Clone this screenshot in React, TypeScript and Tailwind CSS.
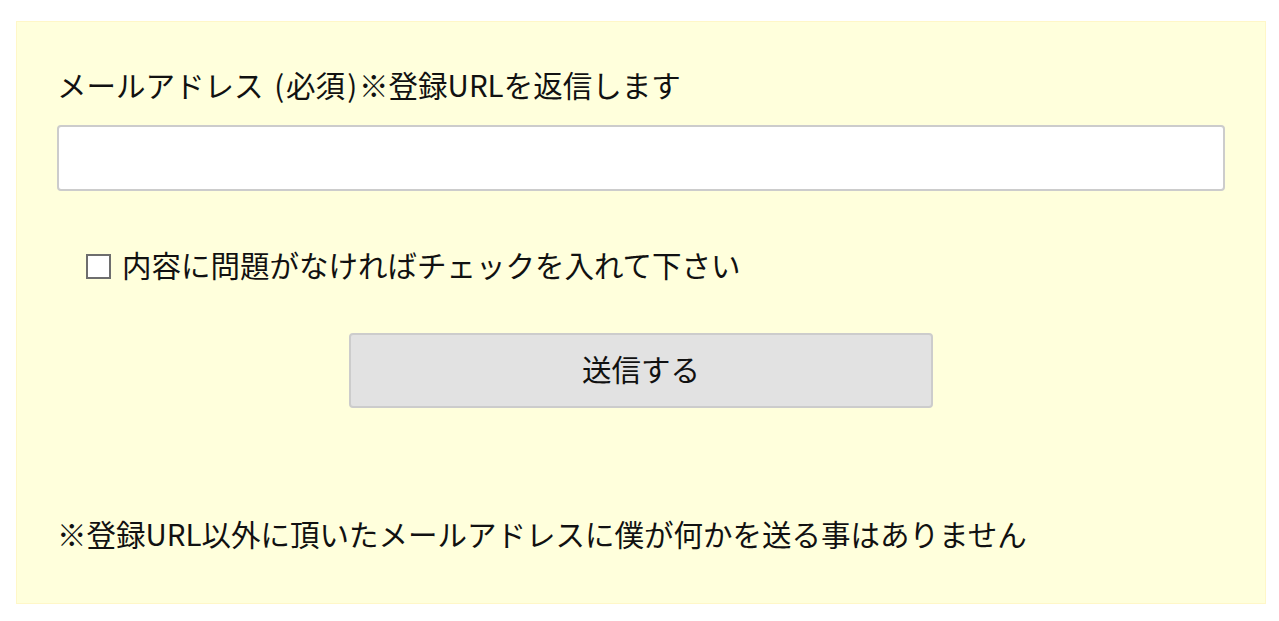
export default function App() {
  const font = { fontFamily: '"Noto Sans CJK JP", "Noto Sans", sans-serif' };
  return (
    <div className="bg-white w-[1279px] h-[621px] pt-[21px] pl-[16px]" style={font}>
      <div className="w-[1250px] h-[583px] border border-[#fff7c8] bg-[#ffffdc] pt-[40px] px-[40px] text-[#111] text-[29.5px]">
        <div className="h-[44px] leading-[44px] whitespace-nowrap">
          メールアドレス<span className="ml-[2px]"> </span><span className="px-[2px]">(</span>必須<span className="px-[2px]">)</span>※登録URLを返信します
        </div>
        <div className="mt-[19px] h-[66px] w-[1168px] rounded-[4px] border-2 border-[#cccccc] bg-white" />
        <div className="mt-[51px] ml-[29px] flex items-center h-[44px] whitespace-nowrap">
          <span className="w-[25px] h-[25px] border-2 border-[#6e6e6e] bg-white mr-[11px] mt-[4px]" />
          <span className="leading-[44px]">内容に問題がなければチェックを入れて下さい</span>
        </div>
        <div className="mt-[47px] flex justify-center">
          <button className="w-[584px] h-[75px] rounded-[4px] border-2 border-[#cccccc] bg-[#e2e2e2] text-[29.5px] text-[#111] flex items-center justify-center pb-[4px]">
            送信する
          </button>
        </div>
        <div className="mt-[103px] h-[44px] leading-[44px] whitespace-nowrap">※登録URL以外に頂いたメールアドレスに僕が何かを送る事はありません</div>
      </div>
    </div>
  );
}
